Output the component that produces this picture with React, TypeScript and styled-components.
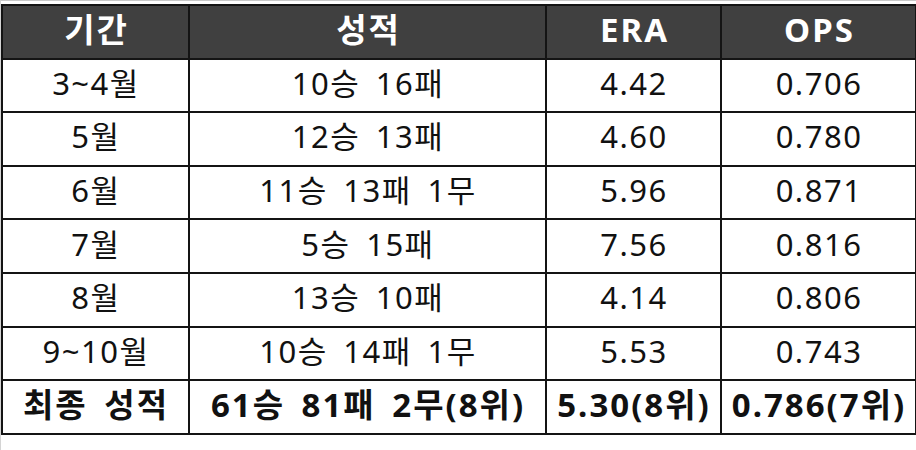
import styled, { createGlobalStyle } from 'styled-components';

const GlobalStyle = createGlobalStyle`
  html, body {
    margin: 0;
    padding: 0;
    background: #ffffff;
  }
  body {
    font-family: "Noto Sans", "Noto Sans CJK KR", sans-serif;
  }
`;

const Sheet = styled.div`
  width: 916px;
  height: 450px;
  box-sizing: border-box;
  border-top: 1px solid #c9c9c9;
  border-left: 1px solid #d4d4d4;
  padding: 3px 0 0 0;
  background: #ffffff;
`;

const Table = styled.table`
  border-collapse: collapse;
  width: 914px;
  height: 430px;
  table-layout: fixed;
  border: 2px solid #141414;
`;

const Col = styled.col<{ $w: number }>`
  width: ${({ $w }) => $w}px;
`;

const HeadCell = styled.th`
  background: #404040;
  color: #ffffff;
  font-size: 33px;
  font-weight: 700;
  letter-spacing: 2px;
  line-height: 1;
  text-align: center;
  vertical-align: middle;
  border: 2px solid #141414;
  padding: 0 0 4px 2px;
`;

const Cell = styled.td<{ $bold?: boolean }>`
  color: #111111;
  font-size: ${({ $bold }) => ($bold ? '33px' : '31px')};
  font-weight: ${({ $bold }) => ($bold ? 700 : 400)};
  letter-spacing: ${({ $bold }) => ($bold ? '2px' : '1.5px')};
  word-spacing: 6px;
  line-height: 1;
  text-align: center;
  vertical-align: middle;
  border: 2px solid #141414;
  padding: 0 0 4px 1px;
  white-space: nowrap;
`;

const Row = styled.tr`
  height: 53.6px;
`;

const rows = [
  ['3~4월', '10승 16패', '4.42', '0.706'],
  ['5월', '12승 13패', '4.60', '0.780'],
  ['6월', '11승 13패 1무', '5.96', '0.871'],
  ['7월', '5승 15패', '7.56', '0.816'],
  ['8월', '13승 10패', '4.14', '0.806'],
  ['9~10월', '10승 14패 1무', '5.53', '0.743'],
];

const total = ['최종 성적', '61승 81패 2무(8위)', '5.30(8위)', '0.786(7위)'];

export default function App() {
  return (
    <>
      <GlobalStyle />
      <Sheet>
        <Table>
          <colgroup>
            <Col $w={187} />
            <Col $w={357} />
            <Col $w={175} />
            <Col $w={195} />
          </colgroup>
          <thead>
            <Row>
              <HeadCell>기간</HeadCell>
              <HeadCell>성적</HeadCell>
              <HeadCell>ERA</HeadCell>
              <HeadCell>OPS</HeadCell>
            </Row>
          </thead>
          <tbody>
            {rows.map((r) => (
              <Row key={r[0]}>
                {r.map((v, i) => (
                  <Cell key={i}>{v}</Cell>
                ))}
              </Row>
            ))}
            <Row>
              {total.map((v, i) => (
                <Cell key={i} $bold>
                  {v}
                </Cell>
              ))}
            </Row>
          </tbody>
        </Table>
      </Sheet>
    </>
  );
}
